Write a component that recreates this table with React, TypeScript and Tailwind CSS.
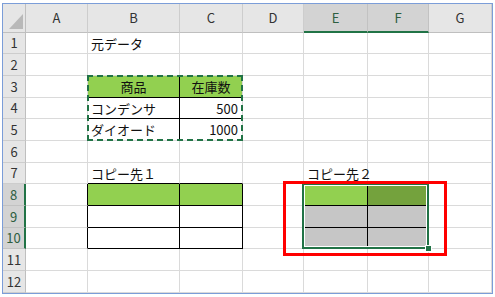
import React from 'react';

const cols = ['A', 'B', 'C', 'D', 'E', 'F', 'G'];
const rows = [1, 2, 3, 4, 5, 6, 7, 8, 9, 10, 11, 12];
const selectedCols = ['E', 'F'];
const selectedRows = [8, 9, 10];

type Cell = {
  text?: string;
  align?: 'left' | 'center' | 'right';
  bg?: string;
  br?: boolean; // black right border
  bb?: boolean; // black bottom border
};

const green = 'bg-[#92d050]';
const gray = 'bg-[#c6c6c6]';

const cells: Record<string, Cell> = {
  B1: { text: '元データ' },
  B3: { text: '商品', align: 'center', bg: green, br: true, bb: true },
  C3: { text: '在庫数', align: 'center', bg: green, bb: true },
  B4: { text: 'コンデンサ', br: true, bb: true },
  C4: { text: '500', align: 'right', bb: true },
  B5: { text: 'ダイオード', br: true },
  C5: { text: '1000', align: 'right' },
  B7: { text: 'コピー先１', bb: true },
  C7: { bb: true },
  E7: { text: 'コピー先２' },
  A8: { br: true },
  A9: { br: true },
  A10: { br: true },
  B8: { bg: green, br: true, bb: true },
  C8: { bg: green, br: true, bb: true },
  B9: { br: true, bb: true },
  C9: { br: true, bb: true },
  B10: { br: true, bb: true },
  C10: { br: true, bb: true },
  E8: { bg: green, br: true, bb: true },
  F8: { bg: 'bg-[#74a23d]', bb: true },
  E9: { bg: gray, br: true, bb: true },
  F9: { bg: gray, bb: true },
  E10: { bg: gray, br: true },
  F10: { bg: gray },
};

const SheetCell: React.FC<{ id: string }> = ({ id }) => {
  const c = cells[id] || {};
  const justify =
    c.align === 'center' ? 'justify-center' : c.align === 'right' ? 'justify-end pr-[4px]' : 'justify-start pl-[3px]';
  return (
    <div
      className={`flex items-center overflow-visible whitespace-nowrap border-r border-b ${justify} ${
        c.bg || 'bg-white'
      } ${c.br ? 'border-r-black' : 'border-r-[#dadada]'} ${c.bb ? 'border-b-black' : 'border-b-[#dadada]'}`}
    >
      {c.text && <span className="relative z-10 text-[13px] leading-none text-[#111]">{c.text}</span>}
    </div>
  );
};

const App: React.FC = () => {
  return (
    <div
      className="w-[495px] h-[297px] bg-white pt-[3px] pl-[2px]"
      style={{ fontFamily: '"Noto Sans CJK JP", "Noto Sans", sans-serif' }}
    >
      <div className="relative w-[491px] border border-[#7b9dd8] bg-white">
        <div className="grid grid-cols-[23px_62px_92px_63px_61px_64px_61px_63px] grid-rows-[29px_21px_22px_22px_21px_22px_22px_21px_22px_22px_21px_22px_22px]">
          {/* corner */}
          <div className="flex items-end justify-end pr-[2px] pb-[3px] bg-[#e6e6e6] border-r border-b border-r-[#bfbfbf] border-b-[#bfbfbf]">
            <svg width="14" height="15" viewBox="0 0 14 15">
              <polygon points="14,0 14,15 0,15" fill="#b9b9b9" />
            </svg>
          </div>

          {/* column headers */}
          {cols.map(col =>
            selectedCols.includes(col) ? (
              <div
                key={col}
                className="flex items-center justify-center bg-[#d3d3d3] border-r border-r-[#c2c2c2] border-b-2 border-b-[#217346] text-[13px] text-[#2d5e40]"
              >
                {col}
              </div>
            ) : (
              <div
                key={col}
                className="flex items-center justify-center bg-[#e6e6e6] border-r border-b border-r-[#cdcdcd] border-b-[#bfbfbf] text-[13px] text-[#333]"
              >
                {col}
              </div>
            )
          )}

          {rows.map(r => (
            <React.Fragment key={r}>
              {selectedRows.includes(r) ? (
                <div className="flex items-center justify-center bg-[#d3d3d3] border-r-2 border-b border-r-[#217346] border-b-[#c2c2c2] text-[13px] text-[#2d5e40]">
                  {r}
                </div>
              ) : (
                <div className="flex items-center justify-center bg-[#e6e6e6] border-r border-b border-r-[#bfbfbf] border-b-[#cdcdcd] text-[13px] text-[#333]">
                  {r}
                </div>
              )}
              {cols.map(col => (
                <SheetCell key={col + r} id={col + r} />
              ))}
            </React.Fragment>
          ))}
        </div>

        {/* copy marquee around B3:C5 */}
        <div className="absolute left-[84px] top-[71px] w-[156px] h-[66px] border-2 border-dashed border-[#217346] pointer-events-none" />

        {/* selection E8:F10 */}
        <div className="absolute left-[299px] top-[179px] w-[127px] h-[66px] border-2 border-[#217346] shadow-[inset_0_0_0_1px_white] pointer-events-none" />
        <div className="absolute left-[422px] top-[241px] w-[7px] h-[7px] bg-[#217346] border border-white" />

        {/* red highlight */}
        <div className="absolute left-[280px] top-[177px] w-[164px] h-[75px] border-[3px] border-[#ff0000] pointer-events-none" />
      </div>
    </div>
  );
};

export default App;
